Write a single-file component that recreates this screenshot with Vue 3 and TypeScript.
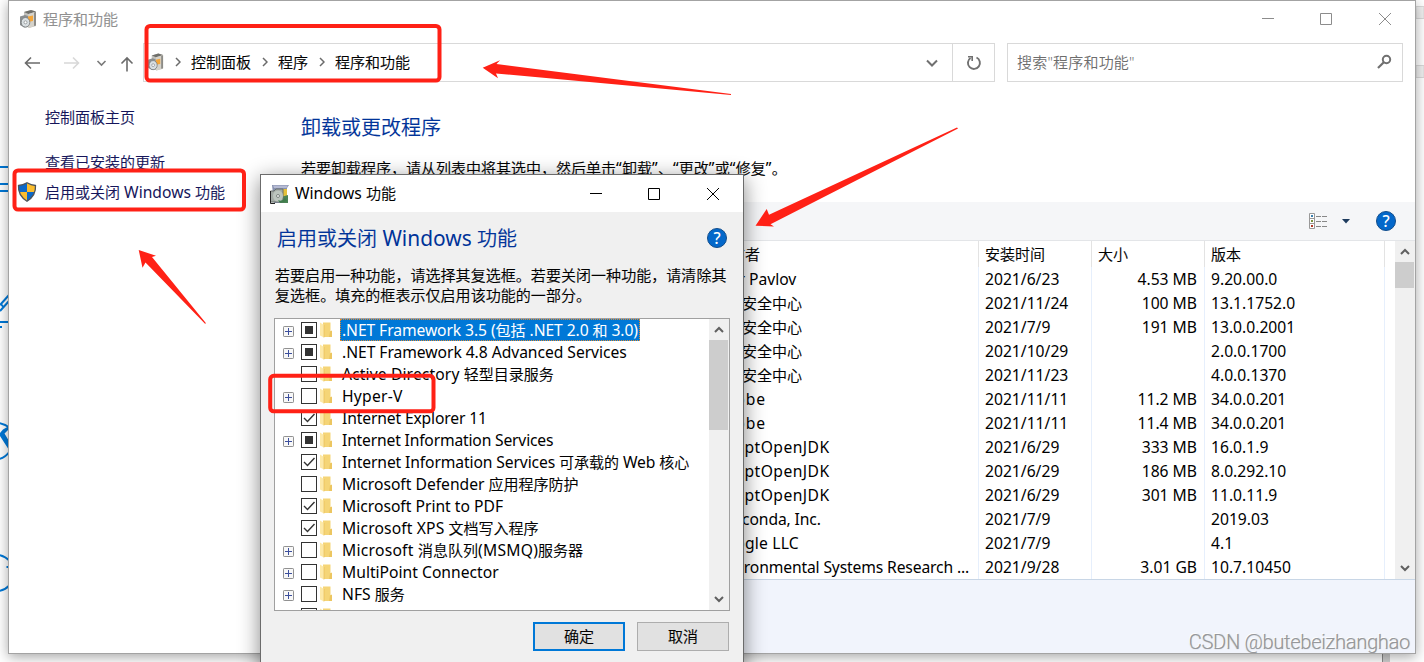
<script setup lang="ts">
import { h } from 'vue'

/* Splits a label into Latin and CJK runs so each run gets its own metrics. */
const Label = (props: { t: string; track?: number }) =>
  h(
    'span',
    { class: 'label' },
    props.t
      .split(/([\u3000-\u9fff\uff00-\uffef]+)/)
      .filter(Boolean)
      .map((run) =>
        /[\u3000-\uffef]/.test(run)
          ? h('span', { class: 'run-cjk' }, run)
          : h('span', { class: 'run-latin', style: props.track ? { letterSpacing: `${props.track}px` } : undefined }, run),
      ),
  )
Label.props = ['t', 'track']

type CheckState = 'none' | 'checked' | 'partial'
interface Feature {
  name: string
  state: CheckState
  expandable?: boolean
  selected?: boolean
  track?: number
}
interface Program {
  publisher: string
  date: string
  size: string
  version: string
  track?: number
}

const features: Feature[] = [
  { name: '.NET Framework 3.5 (包括 .NET 2.0 和 3.0)', state: 'partial', expandable: true, selected: true, track: -0.09 },
  { name: '.NET Framework 4.8 Advanced Services', state: 'partial', expandable: true, track: -0.05 },
  { name: 'Active Directory 轻型目录服务', state: 'none', track: 0.12 },
  { name: 'Hyper-V', state: 'none', expandable: true, track: 0.25 },
  { name: 'Internet Explorer 11', state: 'checked', track: -0.14 },
  { name: 'Internet Information Services', state: 'partial', expandable: true, track: -0.18 },
  { name: 'Internet Information Services 可承载的 Web 核心', state: 'checked', track: -0.12 },
  { name: 'Microsoft Defender 应用程序防护', state: 'none' },
  { name: 'Microsoft Print to PDF', state: 'checked' },
  { name: 'Microsoft XPS 文档写入程序', state: 'checked', track: 0.13 },
  { name: 'Microsoft 消息队列(MSMQ)服务器', state: 'none', expandable: true, track: 0.25 },
  { name: 'MultiPoint Connector', state: 'none', expandable: true },
  { name: 'NFS 服务', state: 'none', expandable: true },
  { name: '', state: 'none' },
]

const programs: Program[] = [
  { publisher: 'Igor Pavlov', date: '2021/6/23', size: '4.53 MB', version: '9.20.00.0' },
  { publisher: '360安全中心', date: '2021/11/24', size: '100 MB', version: '13.1.1752.0', track: 0.35 },
  { publisher: '360安全中心', date: '2021/7/9', size: '191 MB', version: '13.0.0.2001', track: 0.35 },
  { publisher: '360安全中心', date: '2021/10/29', size: '', version: '2.0.0.1700', track: 0.35 },
  { publisher: '360安全中心', date: '2021/11/23', size: '', version: '4.0.0.1370', track: 0.35 },
  { publisher: 'Adobe', date: '2021/11/11', size: '11.2 MB', version: '34.0.0.201', track: 0.85 },
  { publisher: 'Adobe', date: '2021/11/11', size: '11.4 MB', version: '34.0.0.201', track: 0.85 },
  { publisher: 'AdoptOpenJDK', date: '2021/6/29', size: '333 MB', version: '16.0.1.9', track: 0.45 },
  { publisher: 'AdoptOpenJDK', date: '2021/6/29', size: '186 MB', version: '8.0.292.10', track: 0.45 },
  { publisher: 'AdoptOpenJDK', date: '2021/6/29', size: '301 MB', version: '11.0.11.9', track: 0.45 },
  { publisher: 'Anaconda, Inc.', date: '2021/7/9', size: '', version: '2019.03', track: -0.12 },
  { publisher: 'Google LLC', date: '2021/7/9', size: '', version: '4.1', track: 0.2 },
  { publisher: 'Environmental Systems Research ...', date: '2021/9/28', size: '3.01 GB', version: '10.7.10450', track: -0.14 },
]

const crumbs = ['控制面板', '程序', '程序和功能']
</script>

<template>
  <div class="desktop">
    <svg class="backdrop" width="1424" height="662" viewBox="0 0 1424 662">
      <g fill="none" stroke="#0078d7" stroke-width="2">
        <path d="M0 167H9M0 184H9M0 191H9M0 322H9M0 327H2" />
        <path d="M0 305L9 295M0 311L9 301M1 304L4 308" />
        <path d="M-1 423Q5 424 10 428M-1 459Q5 458 10 451" />
        <path d="M-1 555Q5 556 10 561M-1 591Q5 590 10 585M6.500 567H9" />
      </g>
      <path d="M0 433L3 429.500L9 426V429L4.500 433.500L9 441V450L4.500 443L0 436z" fill="#0078d7" />
      <path d="M1416 6.500H1424V18.500H1416zM1416 65.500H1424V77.500H1416z" fill="#f0f0f0" stroke="#d9d9d9" />
      <path d="M1382.500 654V662" stroke="#8a8a8a" />
      <path d="M1383 654H1390V662H1383z" fill="#cfcfcf" />
    </svg>

    <section class="window programs">
      <header class="titlebar">
        <svg class="app-icon" width="18" height="19" viewBox="0 0 18 19">
          <path d="M5 2L12 0L17 1.500V16L10 18L5 14z" fill="#c3c2bd" />
          <path d="M5 2L12 0L17 1.500L9.500 4z" fill="#6f6f6a" />
          <path d="M9.500 4L17 1.800V15.500L9.500 18z" fill="#d5d2ca" />
          <path d="M15 2.500L17 1.800V15.500L15 16z" fill="#8c8b87" />
          <path d="M9 6.500L14 5.500V11L9 12z" fill="#f4a63a" />
          <path d="M1 6.500L6 5L9 6V17L5 17.500L1 15z" fill="#8a8e90" />
          <ellipse cx="6.500" cy="12.300" rx="4.300" ry="4.800" fill="#d9dfe2" stroke="#737779" stroke-width=".8" />
          <circle cx="6.500" cy="12.300" r="1.500" fill="#fff" stroke="#8b9093" stroke-width=".8" />
        </svg>
        <span class="window-title"><Label t="程序和功能" /></span>
        <svg class="controls" width="130" height="14" viewBox="0 0 130 14" fill="none" stroke="#8c8c8c">
          <path d="M0 5.500H12M58.500 .5H69.500V11.500H58.500zM117 0L129 12M129 0L117 12" />
        </svg>
      </header>

      <nav class="navbar">
        <svg class="nav-arrows" width="134" height="39" viewBox="0 0 134 39" fill="none" stroke-width="1.600">
          <path d="M16.500 20H31M22 14.500L16.500 20L22 25.500" stroke="#6b6b6b" />
          <path d="M55 20H69M64 14.500L69.500 20L64 25.500" stroke="#d8d8d8" />
          <path d="M88.500 18L92.500 22L96.500 18" stroke="#7a7a7a" />
          <path d="M118 28.500V15M112.500 20.500L118 15L123.500 20.500" stroke="#6b6b6b" />
        </svg>
        <div class="address">
          <svg class="app-icon" width="17" height="19" viewBox="0 0 18 19">
            <path d="M5 2L12 0L17 1.500V16L10 18L5 14z" fill="#c3c2bd" />
            <path d="M5 2L12 0L17 1.500L9.500 4z" fill="#6f6f6a" />
            <path d="M9.500 4L17 1.800V15.500L9.500 18z" fill="#d5d2ca" />
            <path d="M15 2.500L17 1.800V15.500L15 16z" fill="#8c8b87" />
            <path d="M9 6.500L14 5.500V11L9 12z" fill="#f4a63a" />
            <path d="M1 6.500L6 5L9 6V17L5 17.500L1 15z" fill="#8a8e90" />
            <ellipse cx="6.500" cy="12.300" rx="4.300" ry="4.800" fill="#d9dfe2" stroke="#737779" stroke-width=".8" />
            <circle cx="6.500" cy="12.300" r="1.500" fill="#fff" stroke="#8b9093" stroke-width=".8" />
          </svg>
          <span v-for="crumb in crumbs" :key="crumb" class="crumb">
            <svg width="6" height="10" viewBox="0 0 6 10" fill="none" stroke="#6b6b6b" stroke-width="1.500">
              <path d="M1 1L5 5L1 9" />
            </svg>
            <Label :t="crumb" />
          </span>
          <svg class="address-chevron" width="12" height="8" viewBox="0 0 12 8" fill="none" stroke="#707070" stroke-width="2">
            <path d="M1 1.500L6 6.500L11 1.500" />
          </svg>
          <div class="refresh">
            <svg width="16" height="16" viewBox="0 0 16 16" fill="none" stroke="#707070" stroke-width="1.900">
              <path d="M10.500 2.500A6 6 0 1 1 4.500 3" />
              <path d="M2 1.800H6.200V6" stroke-width="1.600" />
            </svg>
          </div>
        </div>
        <div class="search">
          <span>搜索"程序和功能"</span>
          <svg width="15" height="15" viewBox="0 0 15 15" fill="none" stroke="#707070" stroke-width="2">
            <circle cx="9.500" cy="5.500" r="3.700" />
            <path d="M6.800 8.300L1 14" stroke-width="2.200" />
          </svg>
        </div>
      </nav>

      <div class="main">
        <aside class="sidebar">
          <div class="side-link home"><Label t="控制面板主页" /></div>
          <div class="side-link"><Label t="查看已安装的更新" /></div>
          <div class="side-link">
            <svg class="shield" width="20" height="20" viewBox="0 0 20 20">
              <path d="M10 .8Q6 3.300 1.500 3.500Q.8 13.500 10 19.200Q19.200 13.500 18.500 3.500Q14 3.300 10 .8z" fill="#fbbd2d" />
              <path d="M10 .8Q6 3.300 1.500 3.500Q1.300 7 2.400 10H10zM10 10V19.200Q15.500 16 17.600 10z" fill="#0c68c8" />
              <path d="M10 .8Q6 3.300 1.500 3.500Q.8 13.500 10 19.200Q19.200 13.500 18.500 3.500Q14 3.300 10 .8z" fill="none" stroke="#4d545b" stroke-width="1.300" />
            </svg>
            <Label t="启用或关闭 Windows 功能" />
          </div>
        </aside>

        <div class="content">
          <h1><Label t="卸载或更改程序" /></h1>
          <p class="hint"><Label t="若要卸载程序，请从列表中将其选中，然后单击“卸载”、“更改”或“修复”。" :track="0.3" /></p>
          <div class="toolbar">
            <svg class="view-icon" width="19" height="17" viewBox="0 0 19 17">
              <path d="M.5 .5H5.500V15.500H.5zM.5 5.500H5.500M.5 10.500H5.500" fill="#fff" stroke="#999" />
              <path d="M7 3.500H12M13 3.500H18M7 8.500H12M13 8.500H18M7 13.500H12M13 13.500H18" stroke="#888" />
              <path d="M2 2H4V4H2z" fill="#3b80b0" />
              <path d="M2 7H4V9H2z" fill="#7a9440" />
              <path d="M2 12H4V14H2z" fill="#b23b2a" />
            </svg>
            <svg class="drop" width="8" height="5" viewBox="0 0 8 5"><path d="M0 0H8L4 4.500z" fill="#1d3b5e" /></svg>
            <span class="help">?</span>
          </div>
          <div class="table-area">
            <div class="table">
              <div class="row head">
                <span class="cell" />
                <span class="cell publisher-head"><Label t="发布者" /></span>
                <span class="cell"><Label t="安装时间" /></span>
                <span class="cell"><Label t="大小" /></span>
                <span class="cell"><Label t="版本" /></span>
              </div>
              <div v-for="(p, i) in programs" :key="i" class="row">
                <span class="cell" />
                <span class="cell"><Label :t="p.publisher" :track="p.track" /></span>
                <span class="cell"><Label :t="p.date" /></span>
                <span class="cell size"><Label :t="p.size" /></span>
                <span class="cell"><Label :t="p.version" /></span>
              </div>
            </div>
            <div class="scrollbar">
              <svg width="10" height="7" viewBox="0 0 10 7"><path d="M1 6L5 2L9 6" /></svg>
              <i class="thumb" />
              <svg width="10" height="7" viewBox="0 0 10 7"><path d="M1 1L5 5L9 1" /></svg>
            </div>
          </div>
          <div class="details" />
        </div>
      </div>
    </section>

    <section class="window dialog">
      <header class="titlebar">
        <svg class="app-icon" width="20" height="20" viewBox="0 0 20 20">
          <path d="M2 1H19L17 4V19H4z" fill="#8790ae" />
          <path d="M3 1.500H18L16.500 4H4z" fill="#b5bad3" />
          <path d="M12 5H17V13H12z" fill="#e5c13b" />
          <path d="M11 13L18 11V19H11z" fill="#4b8355" />
          <path d="M.5 7H4L6 5H13V18H.5z" fill="#a4aba6" stroke="#68716d" />
          <path d="M.5 7V19.500H5" fill="none" stroke="#222" />
          <ellipse cx="8" cy="12" rx="5" ry="5.500" fill="#bcc5be" />
          <circle cx="8" cy="12" r="1.500" fill="#f5f5f5" stroke="#7c8580" />
          <path d="M8 16Q12 18 15 14L17 17L10 19z" fill="#3e7c4b" />
        </svg>
        <span class="window-title"><Label t="Windows 功能" /></span>
        <svg class="controls" width="130" height="14" viewBox="0 0 130 14" fill="none" stroke="#000">
          <path d="M0 6.500H12M58.500 1.500H69.500V12.500H58.500zM117 1L129 13M129 1L117 13" />
        </svg>
      </header>
      <div class="dialog-body">
        <div class="dialog-heading">
          <h2><Label t="启用或关闭 Windows 功能" /></h2>
          <span class="help">?</span>
        </div>
        <p class="explain">
          <Label t="若要启用一种功能，请选择其复选框。若要关闭一种功能，请清除其" /><br />
          <Label t="复选框。填充的框表示仅启用该功能的一部分。" />
        </p>
        <div class="feature-list">
          <div class="features">
            <div v-for="(f, i) in features" :key="i" class="feature">
              <span class="expander-slot">
                <svg v-if="f.expandable" width="11" height="11" viewBox="0 0 11 11">
                  <rect x=".5" y=".5" width="10" height="10" rx=".7" fill="#f8f8f8" stroke="#919191" />
                  <path d="M2 5.500H9M5.500 2V9" stroke="#3c4f9c" />
                </svg>
              </span>
              <span class="checkbox">
                <i v-if="f.state === 'partial'" />
                <svg v-else-if="f.state === 'checked'" width="14" height="14" viewBox="0 0 14 14">
                  <path d="M2 7L5.500 10.500L12.500 3" fill="none" stroke="#333" stroke-width="1.400" />
                </svg>
              </span>
              <svg class="folder" width="12" height="16" viewBox="0 0 12 16">
                <path d="M3 .5H10.500V9H12V15H3z" fill="#f5d577" />
                <path d="M10 9.500L12 8.500V15H9z" fill="#ecc661" />
                <path d="M0 .5L4 3V15.500L0 13.500z" fill="#fde9a8" />
                <path d="M4 3V15.500" stroke="#e5b84e" stroke-width=".6" />
              </svg>
              <span class="feature-name" :class="{ selected: f.selected }"><Label :t="f.name" :track="f.track" /></span>
            </div>
          </div>
          <div class="scrollbar">
            <svg width="10" height="7" viewBox="0 0 10 7"><path d="M1 6L5 2L9 6" /></svg>
            <i class="thumb" />
            <svg width="10" height="7" viewBox="0 0 10 7"><path d="M1 1L5 5L9 1" /></svg>
          </div>
        </div>
        <div class="actions">
          <button class="primary"><Label t="确定" /></button>
          <button><Label t="取消" /></button>
        </div>
      </div>
    </section>

    <svg class="annotations" width="1424" height="662" viewBox="0 0 1424 662">
      <g fill="none" stroke="#ff2116" stroke-width="4">
        <rect x="146.500" y="26" width="293" height="54.500" rx="3.500" />
        <rect x="14.500" y="170.500" width="229.500" height="39" rx="3.500" />
        <rect x="270.200" y="375.800" width="163.300" height="35.500" rx="3.500" />
      </g>
      <g fill="#ff2116">
        <path d="M482.700 67.700L500 60.300L496.500 64L731 94L731 95L496 73.500L498 78.300Z" />
        <path d="M138.700 250L156 255.700L152 257L206 323.300L205 323.700L145.500 262.500L142.500 267.800Z" />
        <path d="M755.500 225.800L766.700 209L769 214.700L957 127.500L958 128.500L770.500 224.300L774 226.400Z" />
      </g>
    </svg>
    <span class="watermark">CSDN @butebeizhanghao</span>
  </div>
</template>

<style>
html,
body {
  overflow: hidden;
  background: #fff;
}
.run-latin {
  font-size: 1.045em;
}
.run-cjk {
  font-weight: 350;
  -webkit-text-stroke: 0.15px currentColor;
}
</style>

<style scoped>
.desktop {
  position: relative;
  width: 1424px;
  height: 662px;
  overflow: hidden;
  background: #fff;
  color: #000;
  font: 15px/24px 'Noto Sans', 'Noto Sans CJK SC', sans-serif;
  white-space: pre;
}
.desktop *,
.desktop {
  box-sizing: border-box;
}
svg {
  display: block;
  flex: none;
}
h1,
h2,
p {
  margin: 0;
  font-weight: 400;
}
.backdrop,
.annotations {
  position: absolute;
  left: 0;
  top: 0;
}
.window {
  position: absolute;
  display: flex;
  flex-direction: column;
  background: #fff;
}
.programs {
  left: 8px;
  top: 0;
  width: 1408px;
  height: 654px;
  border: 1px solid #a3a3a3;
  box-shadow: 0 3px 12px rgba(0, 0, 0, 0.35);
}
.dialog {
  left: 260px;
  top: 174px;
  width: 484px;
  height: 510px;
  border: 1px solid #6b6b6b;
  box-shadow: 0 5px 20px rgba(0, 0, 0, 0.48);
}
.titlebar {
  display: flex;
  align-items: center;
  flex: none;
  height: 37px;
}
.programs .titlebar {
  height: 42px;
  padding: 0 23px 5px 10px;
}
.window-title {
  padding-bottom: 2px;
}
.programs .window-title {
  margin-left: 6px;
  color: #8f8f8f;
}
.dialog .titlebar {
  padding: 0 23px 0 9px;
}
.dialog .window-title {
  margin-left: 5px;
  padding-bottom: 1px;
}
.controls {
  margin-left: auto;
}
.navbar {
  display: flex;
  flex: none;
  height: 39px;
  padding-right: 12px;
}
.address {
  display: flex;
  align-items: center;
  width: 852px;
  border: 1px solid #d9d9d9;
  padding-left: 3px;
}
.crumb {
  display: flex;
  align-items: center;
  gap: 10px;
  margin-left: 11px;
  padding-bottom: 2px;
}
.address-chevron {
  margin-left: auto;
  margin-right: 14px;
}
.refresh {
  display: grid;
  place-items: center;
  width: 42px;
  height: 37px;
  border-left: 1px solid #d9d9d9;
}
.search {
  display: flex;
  align-items: center;
  justify-content: space-between;
  flex: 1;
  margin-left: 12px;
  border: 1px solid #d9d9d9;
  padding: 0 10px 2px 9px;
  color: #6d6d6d;
  font-weight: 350;
  letter-spacing: 0.2px;
}
.main {
  display: flex;
  flex: 1;
  min-height: 0;
}
.sidebar {
  width: 251px;
  padding: 23px 0 0 36px;
  color: #15155a;
}
.side-link {
  position: relative;
  height: 30px;
}
.home {
  height: 45px;
}
.shield {
  position: absolute;
  left: -28px;
  top: 2px;
}
.content {
  display: flex;
  flex-direction: column;
  flex: 1;
  min-width: 0;
}
h1 {
  height: 30px;
  margin: 31px 0 0 41px;
  font-size: 20px;
  line-height: 30px;
  color: #003399;
}
.hint {
  height: 24px;
  margin: 13px 0 22px 41px;
}
.toolbar {
  display: flex;
  align-items: center;
  justify-content: flex-end;
  flex: none;
  height: 39px;
  padding-right: 19px;
  border-bottom: 1px solid #e3e5e8;
  background: #f5f6f8;
}
.drop {
  margin: 0 26px 0 14px;
}
.help {
  display: flex;
  justify-content: center;
  flex: none;
  width: 20px;
  height: 20px;
  border: 1px solid #114d8c;
  border-radius: 50%;
  background: #0468ca;
  color: #fff;
  font-size: 16px;
  font-weight: 500;
  line-height: 18px;
}
.table-area {
  display: flex;
  flex: none;
  height: 338px;
}
.table {
  flex: 1;
  overflow: hidden;
}
.row {
  display: grid;
  grid-template-columns: 448px 271px 113px 113px 180px;
  height: 24px;
}
.head {
  height: 26px;
}
.head .cell {
  border-color: #e3e3e3;
  line-height: 26px;
}
.cell {
  padding: 0 6px;
  border-right: 1px solid #e6effc;
  overflow: hidden;
}
.publisher-head {
  padding-left: 7px;
}
.cell:first-child {
  border-right: 0;
}
.size {
  padding-right: 7px;
  text-align: right;
}
.scrollbar {
  display: flex;
  flex-direction: column;
  align-items: center;
  width: 20px;
  background: #f0f0f0;
  padding: 7px 1px 7px 0;
}
.scrollbar path {
  fill: none;
  stroke: #606060;
  stroke-width: 2;
}
.thumb {
  width: 19px;
  height: 26px;
  margin: 7px 0 auto;
  background: #cdcdcd;
}
.details {
  flex: 1;
  border-top: 1px solid #c8d6e6;
  background: #f1f4fc;
}
.dialog-body {
  flex: 1;
  padding: 11px 13px 0 13px;
  background: #f0f0f0;
}
.dialog-heading {
  display: flex;
  justify-content: space-between;
  align-items: center;
  height: 30px;
  padding: 0 3px;
}
h2 {
  font-size: 20px;
  line-height: 30px;
  color: #003399;
}
.explain {
  height: 40px;
  margin: 12px 0 13px 1px;
  line-height: 20px;
  letter-spacing: 0.05px;
}
.feature-list {
  display: flex;
  width: 456px;
  height: 293px;
  border: 1px solid #a0a0a0;
  background: #fff;
}
.features {
  flex: 1;
  overflow: hidden;
}
.feature {
  display: flex;
  align-items: center;
  height: 22px;
  line-height: 22px;
}
.expander-slot {
  width: 26px;
  padding: 2px 0 0 8px;
}
.checkbox {
  display: grid;
  place-items: center;
  flex: none;
  width: 16px;
  height: 16px;
  border: 1px solid #333;
}
.checkbox i {
  width: 8px;
  height: 8px;
  background: #333;
}
.folder {
  margin: 0 8px 0 3px;
}
.feature-name {
  height: 22px;
  padding: 0 1px;
  border: 1px solid transparent;
  line-height: 20px;
}
.selected {
  border: 1px dotted #e08a30;
  background: #0078d7;
  color: #fff;
}
.feature-list .thumb {
  height: 90px;
}
.actions {
  display: flex;
  justify-content: flex-end;
  gap: 12px;
  width: 455px;
  margin-top: 11px;
}
button {
  width: 92px;
  height: 29px;
  padding: 0 0 2px;
  border: 1px solid #adadad;
  background: #e1e1e1;
  color: #000;
  font: inherit;
  line-height: 24px;
}
.primary {
  border: 2px solid #0078d7;
}
.watermark {
  position: absolute;
  right: 14px;
  top: 630px;
  color: #96989c;
  font: 300 20px/24px Roboto, 'Liberation Sans', sans-serif;
  letter-spacing: -0.25px;
  text-shadow: -1px -1px 0 rgba(255, 255, 255, 0.9), 0 0 1px #9a9a9a;
}
</style>
